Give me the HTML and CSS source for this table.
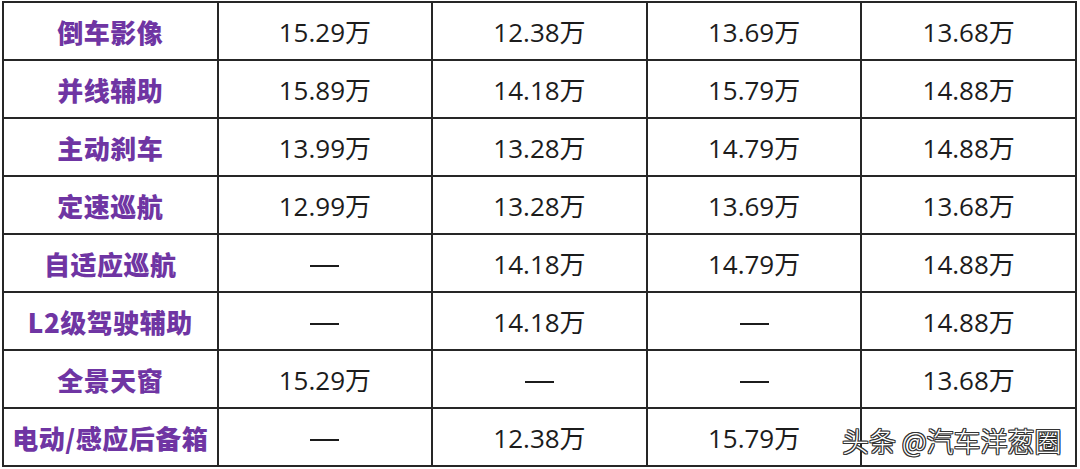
FILE: index.html
```html
<!DOCTYPE html>
<html lang="zh-CN">
<head>
<meta charset="utf-8">
<title>配置价格表</title>
<link rel="stylesheet" href="styles.css">
</head>
<body>
<div class="page">
  <table class="grid">
    <tbody>
      <tr><th>倒车影像</th><td>15.29万</td><td>12.38万</td><td>13.69万</td><td>13.68万</td></tr>
      <tr><th>并线辅助</th><td>15.89万</td><td>14.18万</td><td>15.79万</td><td>14.88万</td></tr>
      <tr><th>主动刹车</th><td>13.99万</td><td>13.28万</td><td>14.79万</td><td>14.88万</td></tr>
      <tr><th>定速巡航</th><td>12.99万</td><td>13.28万</td><td>13.69万</td><td>13.68万</td></tr>
      <tr><th>自适应巡航</th><td><span class="dash"></span></td><td>14.18万</td><td>14.79万</td><td>14.88万</td></tr>
      <tr><th>L2级驾驶辅助</th><td><span class="dash"></span></td><td>14.18万</td><td><span class="dash"></span></td><td>14.88万</td></tr>
      <tr><th>全景天窗</th><td>15.29万</td><td><span class="dash"></span></td><td><span class="dash"></span></td><td>13.68万</td></tr>
      <tr><th>电动/感应后备箱</th><td><span class="dash"></span></td><td>12.38万</td><td>15.79万</td><td></td></tr>
    </tbody>
  </table>
  <div class="watermark">头条 @汽车洋葱圈</div>
</div>
</body>
</html>
```

FILE: styles.css
```css
html, body {
  margin: 0;
  padding: 0;
  background: #ffffff;
}

.page {
  position: relative;
  width: 1080px;
  height: 469px;
  overflow: hidden;
  padding: 1px 0 0 2px;
  box-sizing: border-box;
}

.grid {
  border-collapse: collapse;
  width: 1075px;
  table-layout: fixed;
}

.grid th,
.grid td {
  border: 2px solid #262626;
  height: 56px;
  padding: 0;
  text-align: center;
  vertical-align: middle;
}

.grid th {
  font-family: "Noto Sans CJK SC", sans-serif;
  font-weight: 900;
  font-size: 26px;
  color: #6f35a3;
  letter-spacing: 0.5px;
}

.grid td {
  font-family: "Open Sans", "Noto Sans CJK SC", sans-serif;
  font-weight: 400;
  font-size: 26px;
  color: #1c1c1c;
}

.dash {
  display: inline-block;
  width: 29px;
  height: 2px;
  background: #1c1c1c;
  vertical-align: middle;
}

.watermark {
  position: absolute;
  left: 842px;
  top: 421px;
  font-family: "Noto Sans CJK SC", sans-serif;
  font-size: 27px;
  font-weight: 300;
  color: #ffffff;
  text-shadow:
    1px 0 0 #333, -1px 0 0 #333, 0 1px 0 #333, 0 -1px 0 #333,
    1px 1px 0 #333, -1px -1px 0 #333, 1px -1px 0 #333, -1px 1px 0 #333;
}
```
